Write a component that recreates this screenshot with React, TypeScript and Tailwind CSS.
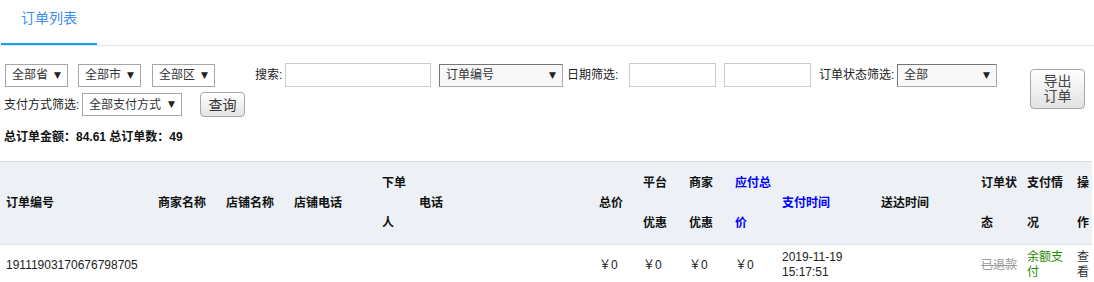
import type { FC, ReactNode } from "react";

interface FakeSelectProps {
  label: string;
  width: string;
  dark?: boolean;
}

// Native-looking select box, drawn with divs so the arrow matches
const FakeSelect: FC<FakeSelectProps> = ({ label, width, dark }) => (
  <div
    className={`${width} flex h-[23px] items-center justify-between border pl-[6px] pr-[6px] text-[12px] text-[#333] ${
      dark ? "border-[#a9a9a9] border-t-[#777] border-l-[#777] bg-[#f8f8f8]" : "border-[#a6a6a6] bg-white"
    }`}
  >
    <span>{label}</span>
    <span className="font-['DejaVu_Sans',sans-serif] text-[9px] leading-none text-[#222]">▼</span>
  </div>
);

const TextBox: FC<{ width: string }> = ({ width }) => (
  <div className={`${width} h-[24px] border border-[#cccccc] bg-white`} />
);

const Th: FC<{ children: ReactNode; blue?: boolean }> = ({ children, blue }) => (
  <th
    className={`py-[1px] pl-[6px] pr-0 text-left align-middle text-[12px] font-bold leading-[40px] ${
      blue ? "text-[#0000ff]" : "text-[#111]"
    }`}
  >
    {children}
  </th>
);

const Td: FC<{ children?: ReactNode; className?: string }> = ({ children, className }) => (
  <td className={`py-[5px] pl-[6px] pr-[4px] align-middle text-[12px] leading-[15px] ${className ?? "text-[#222]"}`}>
    {children}
  </td>
);

const colWidths = [
  "w-[152px]",
  "w-[68px]",
  "w-[68px]",
  "w-[88px]",
  "w-[37px]",
  "w-[180px]",
  "w-[44px]",
  "w-[46px]",
  "w-[46px]",
  "w-[47px]",
  "w-[99px]",
  "w-[100px]",
  "w-[46px]",
  "w-[50px]",
  "w-[21px]",
];

export default function App() {
  return (
    <div className="h-[282px] w-[1094px] overflow-hidden bg-white font-['Liberation_Sans','Noto_Sans_CJK_SC',sans-serif] text-[12px] text-[#222]">
      {/* Tabs */}
      <div className="flex h-[46px] border-b border-[#e6e6e6]">
        <div className="ml-[1px] flex h-[45px] w-[96px] justify-center border-b-2 border-[#12a0ff] pt-[10px] text-[14px] leading-[16px] text-[#3d8ef0]">
          订单列表
        </div>
      </div>

      {/* Filters */}
      <div className="flex pl-[4px] pt-[17px]">
        <div className="flex-1">
          <div className="flex h-[24px] items-center">
            <div className="ml-[1px]">
              <FakeSelect label="全部省" width="w-[63px]" />
            </div>
            <div className="ml-[10px]">
              <FakeSelect label="全部市" width="w-[63px]" />
            </div>
            <div className="ml-[11px]">
              <FakeSelect label="全部区" width="w-[63px]" />
            </div>
            <span className="ml-[40px] w-[30px]">搜索:</span>
            <TextBox width="w-[146px]" />
            <div className="ml-[8px]">
              <FakeSelect label="订单编号" width="w-[124px]" dark />
            </div>
            <span className="ml-[4px] w-[62px]">日期筛选:</span>
            <TextBox width="w-[87px]" />
            <div className="ml-[8px]">
              <TextBox width="w-[87px]" />
            </div>
            <span className="ml-[8px] w-[78px]">订单状态筛选:</span>
            <FakeSelect label="全部" width="w-[100px]" dark />
          </div>

          <div className="mt-[5px] flex h-[25px] items-center">
            <span className="w-[78px]">支付方式筛选:</span>
            <FakeSelect label="全部支付方式" width="w-[100px]" />
            <button className="ml-[18px] h-[25px] w-[45px] rounded-[4px] border border-[#a8a8a8] bg-gradient-to-b from-white to-[#e4e4e4] text-[14px] leading-none text-[#333]">
              查询
            </button>
          </div>

          <div className="mt-[12px] text-[12px] font-bold leading-[16px] text-[#111]">
            总订单金额：84.61 总订单数：49
          </div>
        </div>

        <button className="mr-[9px] mt-[6px] flex h-[40px] w-[55px] flex-col items-center justify-center rounded-[4px] border border-[#a8a8a8] bg-gradient-to-b from-white to-[#e2e2e2] text-[14px] leading-[15px] text-[#444]">
          <span>导出</span>
          <span>订单</span>
        </button>
      </div>

      {/* Table */}
      <table className="mt-[16px] w-[1092px] table-fixed border-collapse">
        <colgroup>
          {colWidths.map((w, i) => (
            <col key={i} className={w} />
          ))}
        </colgroup>
        <thead>
          <tr className="border-t border-b border-[#dde2e8] border-t-[#dddddd] bg-[#edf1f5]">
            <Th>订单编号</Th>
            <Th>商家名称</Th>
            <Th>店铺名称</Th>
            <Th>店铺电话</Th>
            <Th>
              下单
              <br />人
            </Th>
            <Th>电话</Th>
            <Th>总价</Th>
            <Th>
              平台
              <br />
              优惠
            </Th>
            <Th>
              商家
              <br />
              优惠
            </Th>
            <Th blue>
              应付总
              <br />价
            </Th>
            <Th blue>支付时间</Th>
            <Th>送达时间</Th>
            <Th>
              订单状
              <br />态
            </Th>
            <Th>
              支付情
              <br />况
            </Th>
            <Th>
              操
              <br />作
            </Th>
          </tr>
        </thead>
        <tbody>
          <tr>
            <Td className="text-[12.4px] text-[#222]">19111903170676798705</Td>
            <Td />
            <Td />
            <Td />
            <Td />
            <Td />
            <Td>￥0</Td>
            <Td>￥0</Td>
            <Td>￥0</Td>
            <Td>￥0</Td>
            <Td className="text-[12.4px] text-[#222]">
              2019-11-19
              <br />
              15:17:51
            </Td>
            <Td />
            <Td className="text-[#999] line-through">已退款</Td>
            <Td className="text-[#1f8a00]">余额支付</Td>
            <Td className="pr-0 text-[#333]">查看</Td>
          </tr>
        </tbody>
      </table>
    </div>
  );
}
